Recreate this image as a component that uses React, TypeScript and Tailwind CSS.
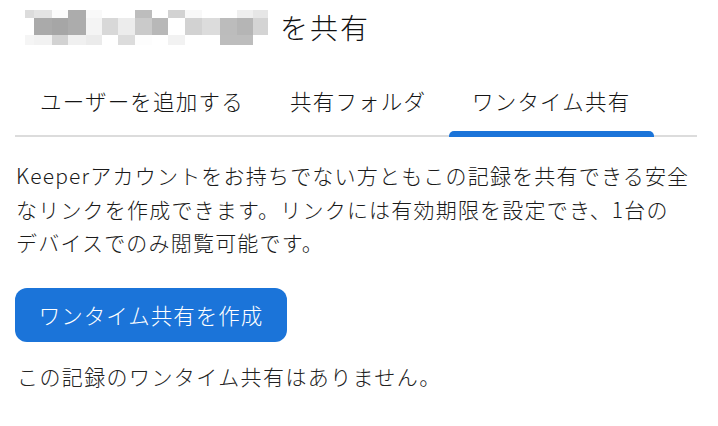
import React from "react";

const cols = [0, 9, 27, 43, 61, 77, 93, 110, 127, 143, 160, 177, 195, 212, 228, 243];
const rows = [
  { y: 0, h: 8, c: ["dcdcdc", "e4e4e4", "fbfbfb", "acacac", "f9f9f9", "ffffff", "ffffff", "bdbdbd", "ffffff", "d2d2d2", "f8f8f8", "ffffff", "ffffff", "efefef", "e6e6e6"] },
  { y: 8, h: 17, c: ["ffffff", "aaaaaa", "a6a6a6", "acacac", "f4f4f4", "d8d8d8", "ececec", "cacaca", "b8b8b8", "ffffff", "d2d2d2", "dcdcdc", "bcbcbc", "b5b5b5", "d4d4d4"] },
  { y: 25, h: 10, c: ["f5f5f5", "f2f2f2", "d2d2d2", "f0f0f0", "ebebeb", "ffffff", "dcdcdc", "fdfdfd", "ffffff", "f2f2f2", "ffffff", "ffffff", "bdbdbd", "bdbdbd", "ffffff"] },
];

function Redacted() {
  return (
    <svg width="243" height="35" viewBox="0 0 243 35" shapeRendering="crispEdges">
      {rows.map((r) =>
        r.c.map((c, i) => (
          <rect key={`${r.y}-${i}`} x={cols[i]} y={r.y} width={cols[i + 1] - cols[i]} height={r.h} fill={`#${c}`} />
        ))
      )}
    </svg>
  );
}

const tabs = [
  { label: "ユーザーを追加する", w: "w-[250px]", active: false },
  { label: "共有フォルダ", w: "w-[182px]", active: false },
  { label: "ワンタイム共有", w: "w-[205px]", active: true },
];

export default function App() {
  return (
    <div
      className="w-[718px] h-[426px] bg-white text-[#1a1a1a] font-light overflow-hidden"
      style={{ fontFamily: '"Noto Sans CJK JP", "Noto Sans", sans-serif' }}
    >
      <div className="flex items-center pt-[10px] pl-[25px] h-[45px]">
        <Redacted />
        <span className="ml-[12px] text-[28px] tracking-[2px] leading-[35px] text-[#111]">を共有</span>
      </div>

      <div className="mt-[35px] ml-[15px] mr-[21px] border-b-2 border-[#dcdcdc] flex pl-[2px]">
        {tabs.map((t) => (
          <div key={t.label} className={`${t.w} relative h-[55px] pt-[6px] pl-[23px] text-[21.5px] tracking-[1.2px] leading-[30px] text-[#151515] whitespace-nowrap`}>
            {t.label}
            {t.active && <div className="absolute left-0 right-0 bottom-[-2px] h-[6px] rounded-t-[5px] bg-[#1b74d9]" />}
          </div>
        ))}
      </div>

      <p className="mt-[22px] px-[16px] text-[21px] tracking-[1.2px] leading-[33.5px] text-[#1a1a1a] whitespace-nowrap">
        Keeperアカウントをお持ちでない方ともこの記録を共有できる安全
        <br />
        なリンクを作成できます。リンクには有効期限を設定でき、1台の
        <br />
        デバイスでのみ閲覧可能です。
      </p>

      <button className="mt-[28px] ml-[15px] w-[272px] h-[54px] rounded-[12px] bg-[#1b74d9] text-white text-[21.5px] tracking-[1px] leading-[30px]">
        ワンタイム共有を作成
      </button>

      <p className="mt-[18px] pl-[17px] text-[21px] tracking-[1.4px] leading-[33px] text-[#222]">
        この記録のワンタイム共有はありません。
      </p>
    </div>
  );
}
